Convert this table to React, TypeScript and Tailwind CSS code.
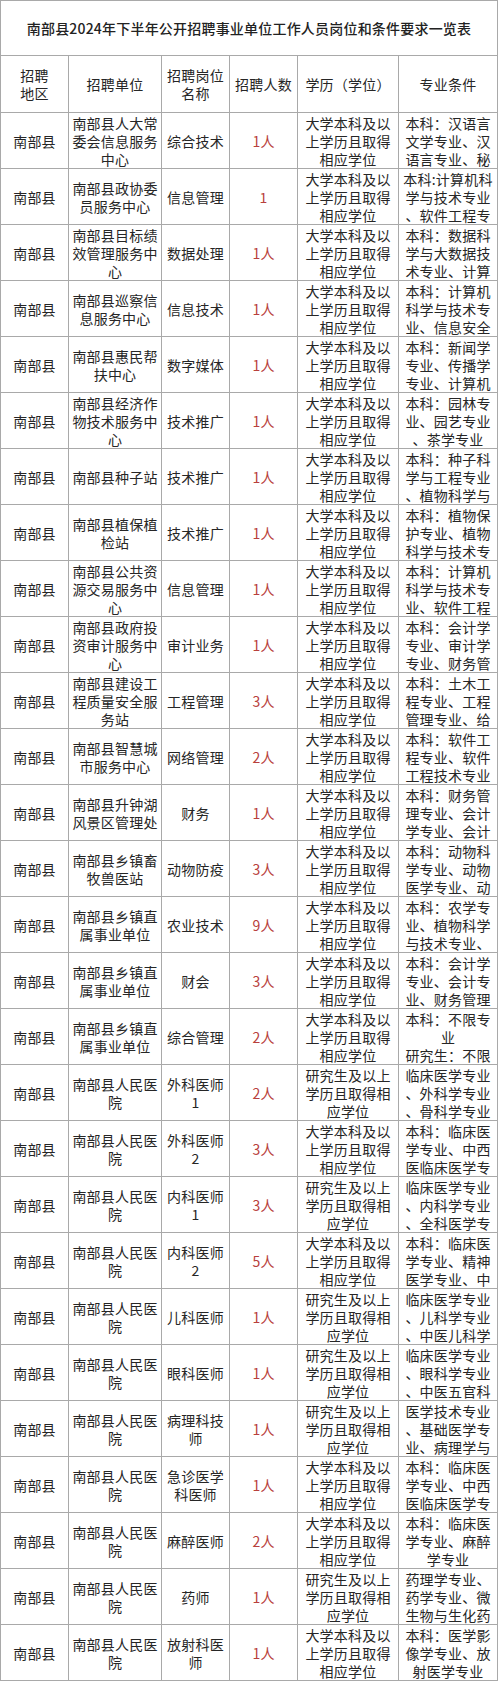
import React from 'react';

type Row = {
  unit: string[];
  post: string[];
  count: string;
  edu: 'b' | 'y';
  major: string[];
};

const BK = ['大学本科及以', '上学历且取得', '相应学位'];
const YJS = ['研究生及以上', '学历且取得相', '应学位'];
const HOSP = ['南部县人民医', '院'];
const TOWN = ['南部县乡镇直', '属事业单位'];

const rows: Row[] = [
  { unit: ['南部县人大常', '委会信息服务', '中心'], post: ['综合技术'], count: '1人', edu: 'b', major: ['本科：汉语言', '文学专业、汉', '语言专业、秘'] },
  { unit: ['南部县政协委', '员服务中心'], post: ['信息管理'], count: '1', edu: 'b', major: ['本科:计算机科', '学与技术专业', '、软件工程专'] },
  { unit: ['南部县目标绩', '效管理服务中', '心'], post: ['数据处理'], count: '1人', edu: 'b', major: ['本科：数据科', '学与大数据技', '术专业、计算'] },
  { unit: ['南部县巡察信', '息服务中心'], post: ['信息技术'], count: '1人', edu: 'b', major: ['本科：计算机', '科学与技术专', '业、信息安全'] },
  { unit: ['南部县惠民帮', '扶中心'], post: ['数字媒体'], count: '1人', edu: 'b', major: ['本科：新闻学', '专业、传播学', '专业、计算机'] },
  { unit: ['南部县经济作', '物技术服务中', '心'], post: ['技术推广'], count: '1人', edu: 'b', major: ['本科：园林专', '业、园艺专业', '、茶学专业'] },
  { unit: ['南部县种子站'], post: ['技术推广'], count: '1人', edu: 'b', major: ['本科：种子科', '学与工程专业', '、植物科学与'] },
  { unit: ['南部县植保植', '检站'], post: ['技术推广'], count: '1人', edu: 'b', major: ['本科：植物保', '护专业、植物', '科学与技术专'] },
  { unit: ['南部县公共资', '源交易服务中', '心'], post: ['信息管理'], count: '1人', edu: 'b', major: ['本科：计算机', '科学与技术专', '业、软件工程'] },
  { unit: ['南部县政府投', '资审计服务中', '心'], post: ['审计业务'], count: '1人', edu: 'b', major: ['本科：会计学', '专业、审计学', '专业、财务管'] },
  { unit: ['南部县建设工', '程质量安全服', '务站'], post: ['工程管理'], count: '3人', edu: 'b', major: ['本科：土木工', '程专业、工程', '管理专业、给'] },
  { unit: ['南部县智慧城', '市服务中心'], post: ['网络管理'], count: '2人', edu: 'b', major: ['本科：软件工', '程专业、软件', '工程技术专业'] },
  { unit: ['南部县升钟湖', '风景区管理处'], post: ['财务'], count: '1人', edu: 'b', major: ['本科：财务管', '理专业、会计', '学专业、会计'] },
  { unit: ['南部县乡镇畜', '牧兽医站'], post: ['动物防疫'], count: '3人', edu: 'b', major: ['本科：动物科', '学专业、动物', '医学专业、动'] },
  { unit: TOWN, post: ['农业技术'], count: '9人', edu: 'b', major: ['本科：农学专', '业、植物科学', '与技术专业、'] },
  { unit: TOWN, post: ['财会'], count: '3人', edu: 'b', major: ['本科：会计学', '专业、会计专', '业、财务管理'] },
  { unit: TOWN, post: ['综合管理'], count: '2人', edu: 'b', major: ['本科：不限专', '业', '研究生：不限'] },
  { unit: HOSP, post: ['外科医师', '1'], count: '2人', edu: 'y', major: ['临床医学专业', '、外科学专业', '、骨科学专业'] },
  { unit: HOSP, post: ['外科医师', '2'], count: '3人', edu: 'b', major: ['本科：临床医', '学专业、中西', '医临床医学专'] },
  { unit: HOSP, post: ['内科医师', '1'], count: '3人', edu: 'y', major: ['临床医学专业', '、内科学专业', '、全科医学专'] },
  { unit: HOSP, post: ['内科医师', '2'], count: '5人', edu: 'b', major: ['本科：临床医', '学专业、精神', '医学专业、中'] },
  { unit: HOSP, post: ['儿科医师'], count: '1人', edu: 'y', major: ['临床医学专业', '、儿科学专业', '、中医儿科学'] },
  { unit: HOSP, post: ['眼科医师'], count: '1人', edu: 'y', major: ['临床医学专业', '、眼科学专业', '、中医五官科'] },
  { unit: HOSP, post: ['病理科技', '师'], count: '1人', edu: 'y', major: ['医学技术专业', '、基础医学专', '业、病理学与'] },
  { unit: HOSP, post: ['急诊医学', '科医师'], count: '1人', edu: 'b', major: ['本科：临床医', '学专业、中西', '医临床医学专'] },
  { unit: HOSP, post: ['麻醉医师'], count: '2人', edu: 'b', major: ['本科：临床医', '学专业、麻醉', '学专业'] },
  { unit: HOSP, post: ['药师'], count: '1人', edu: 'y', major: ['药理学专业、', '药学专业、微', '生物与生化药'] },
  { unit: HOSP, post: ['放射科医', '师'], count: '1人', edu: 'b', major: ['本科：医学影', '像学专业、放', '射医学专业'] },
];

function Cell({ lines, className = '' }: { lines: string[]; className?: string }) {
  return (
    <div className={`flex flex-col items-center justify-center bg-white text-center overflow-hidden whitespace-nowrap ${className}`}>
      {lines.map((l, i) => (
        <span key={i}>{l}</span>
      ))}
    </div>
  );
}

export default function App() {
  return (
    <div className="w-[500px] bg-white font-['Noto_Sans_CJK_SC','Noto_Sans',sans-serif] text-[14px] leading-[18px] tracking-[0.2px] text-[#262626]">
      <div className="grid w-[498px] grid-cols-[67px_92px_67px_67px_100px_98px] gap-px bg-[#a9a9a9] p-px">
        {/* title */}
        <div className="col-span-6 flex h-[54px] items-center justify-center bg-white font-medium text-[#222]">
          南部县2024年下半年公开招聘事业单位工作人员岗位和条件要求一览表
        </div>

        {/* header */}
        <Cell lines={['招聘', '地区']} className="h-[56px]" />
        <Cell lines={['招聘单位']} className="h-[56px]" />
        <Cell lines={['招聘岗位', '名称']} className="h-[56px]" />
        <Cell lines={['招聘人数']} className="h-[56px]" />
        <Cell lines={['学历（学位）']} className="h-[56px]" />
        <Cell lines={['专业条件']} className="h-[56px]" />

        {rows.map((r, i) => (
          <React.Fragment key={i}>
            <Cell lines={['南部县']} className="h-[55px]" />
            <Cell lines={r.unit} className="h-[55px]" />
            <Cell lines={r.post} className="h-[55px]" />
            <Cell lines={[r.count]} className="h-[55px] text-[#b8403c]" />
            <Cell lines={r.edu === 'b' ? BK : YJS} className="h-[55px]" />
            <Cell lines={r.major} className="h-[55px]" />
          </React.Fragment>
        ))}
      </div>
    </div>
  );
}
